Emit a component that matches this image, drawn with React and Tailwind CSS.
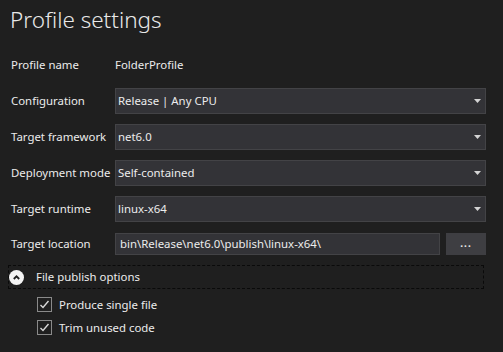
import React from "react";

function Arrow() {
  return (
    <svg width="7" height="4" viewBox="0 0 7 4" className="shrink-0">
      <path d="M0 0 H7 L3.5 4 Z" fill="#d4d4d4" />
    </svg>
  );
}

function Combo({ value }) {
  return (
    <div className="flex h-[26px] flex-1 items-center justify-between border border-[#434346] bg-[#333337] pl-[2px] pr-[4px]">
      <span>{value}</span>
      <Arrow />
    </div>
  );
}

function Row({ label, children, h = "h-[26px]" }) {
  return (
    <div className={`flex ${h} items-center`}>
      <div className="w-[104px] shrink-0 whitespace-nowrap">{label}</div>
      <div className="flex flex-1 self-stretch">{children}</div>
    </div>
  );
}

function Check({ label }) {
  return (
    <div className="flex h-[23px] items-center pl-[37px]">
      <div className="flex h-[15px] w-[15px] items-center justify-center border border-[#8a8a8a]">
        <svg width="11" height="11" viewBox="0 0 11 11">
          <path d="M1.5 6 L4 8.5 L9.5 2" fill="none" stroke="#d8d8d8" strokeWidth="1.4" />
        </svg>
      </div>
      <span className="ml-[7px]">{label}</span>
    </div>
  );
}

export default function App() {
  return (
    <div
      className="h-[352px] w-[503px] overflow-hidden bg-[#1f1f1f] text-[11.4px] text-[#ececec]"
      style={{ fontFamily: '"Noto Sans", "Open Sans", sans-serif' }}
    >
      <div className="h-[52px] px-[10px] pt-[2px]">
        <h1 className="text-[22.5px] font-light leading-[36px] text-[#e8e8e8]">Profile settings</h1>
      </div>
      <div className="flex flex-col pl-[11px] pr-[17px]">
        <Row label="Profile name">
          <div className="flex items-center">FolderProfile</div>
        </Row>
        <div className="mt-[10px] flex flex-col gap-[10px]">
          <Row label="Configuration">
            <Combo value="Release | Any CPU" />
          </Row>
          <Row label="Target framework">
            <Combo value="net6.0" />
          </Row>
          <Row label="Deployment mode">
            <Combo value="Self-contained" />
          </Row>
          <Row label="Target runtime">
            <Combo value="linux-x64" />
          </Row>
        </div>
        <div className="mt-[11px]">
          <Row label="Target location" h="h-[22px]">
            <div className="flex flex-1 items-center border border-[#434346] bg-[#333337] pl-[4px]">
              bin\Release\net6.0\publish\linux-x64\
            </div>
            <div className="ml-[6px] flex w-[40px] items-end justify-center bg-[#3e3e42] pb-[4px] text-[10px] font-bold tracking-[1px]">
              ...
            </div>
          </Row>
        </div>
      </div>
      <div className="ml-[8px] mt-[10px] flex h-[24px] w-[476px] items-center border border-dashed border-[#0a0a0a]">
        <div className="flex h-[15px] w-[15px] items-center justify-center rounded-full bg-[#f4f4f4]">
          <svg width="9" height="9" viewBox="0 0 9 9">
            <path d="M1.8 6 L4.5 3.3 L7.2 6" fill="none" stroke="#1f1f1f" strokeWidth="1.8" />
          </svg>
        </div>
        <span className="ml-[12px]">File publish options</span>
      </div>
      <div className="mt-[4px]">
        <Check label="Produce single file" />
        <Check label="Trim unused code" />
      </div>
    </div>
  );
}
